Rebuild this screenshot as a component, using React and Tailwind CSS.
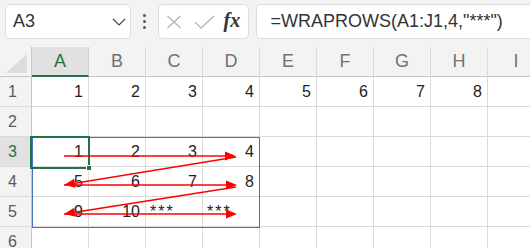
import React from "react";

const cols = ["A", "B", "C", "D", "E", "F", "G", "H", "I"];

// grid contents, row number -> cells (by column index)
const data = {
  1: [1, 2, 3, 4, 5, 6, 7, 8],
  2: [],
  3: [1, 2, 3, 4],
  4: [5, 6, 7, 8],
  5: [9, 10, "***", "***"],
  6: [],
};

// arrow path across the spilled range (coords relative to the grid)
const arrows = [
  [64, 109, 236, 109],
  [236, 110, 64, 138],
  [64, 138, 237, 138],
  [236, 140, 64, 167],
  [64, 167, 237, 167],
];

const head = (x1, y1, x2, y2) => {
  const len = Math.hypot(x2 - x1, y2 - y1);
  const ux = (x2 - x1) / len;
  const uy = (y2 - y1) / len;
  const bx = x2 - ux * 11;
  const by = y2 - uy * 11;
  const px = -uy * 4.5;
  const py = ux * 4.5;
  return `${x2},${y2} ${bx + px},${by + py} ${bx - px},${by - py}`;
};

const Cell = ({ value }) => {
  const isText = typeof value === "string";
  return (
    <div
      className={`h-[30px] border-r border-b border-[#dadada] bg-white flex items-center text-[16px] text-[#222] ${
        isText ? "justify-start pl-[4px] tracking-[2px]" : "justify-end pr-[5px]"
      }`}
    >
      {value}
    </div>
  );
};

export default function App() {
  return (
    <div className="w-[530px] h-[248px] overflow-hidden bg-[#f3f3f3] font-['Liberation_Sans',Arial,sans-serif]">
      {/* Toolbar: name box + formula bar */}
      <div className="flex items-start h-[47px] pt-[4px] pl-[5px]">
        <div className="shrink-0 w-[126px] h-[35px] bg-white border border-[#dcdcdc] rounded-[5px] flex items-center justify-between pl-[7px] pr-[4px]">
          <span className="text-[18px] text-[#333]">A3</span>
          <svg width="14" height="8" viewBox="0 0 14 8">
            <path d="M1 1 L7 7 L13 1" fill="none" stroke="#444" strokeWidth="1.2" />
          </svg>
        </div>
        <div className="shrink-0 w-[26.5px] h-[35px] flex flex-col items-center justify-center gap-[3px]">
          <div className="w-[3px] h-[3px] rounded-full bg-[#555]" />
          <div className="w-[3px] h-[3px] rounded-full bg-[#555]" />
          <div className="w-[3px] h-[3px] rounded-full bg-[#555]" />
        </div>
        <div className="shrink-0 w-[91px] h-[35px] bg-white border border-[#dcdcdc] rounded-[5px] flex items-center pl-[7px]">
          <svg width="16" height="14" viewBox="0 0 16 14">
            <path d="M1.5 1 L14.5 13 M14.5 1 L1.5 13" stroke="#b4b4b4" strokeWidth="1.3" />
          </svg>
          <svg width="21" height="14" viewBox="0 0 21 14" className="ml-[12px]">
            <path d="M1 7 L7 13 L20 1" fill="none" stroke="#b4b4b4" strokeWidth="1.3" />
          </svg>
          <span className="ml-[9px] -mt-[3px] font-['Liberation_Serif',serif] italic font-bold text-[20px] text-[#333] leading-none">
            fx
          </span>
        </div>
        <div className="shrink-0 ml-[7px] w-[290px] h-[35px] bg-white border border-[#dcdcdc] rounded-[5px] flex items-center pl-[14px]">
          <span className="text-[18px] text-[#333] whitespace-nowrap">=WRAPROWS(A1:J1,4,"***")</span>
        </div>
      </div>

      {/* Sheet grid */}
      <div className="relative">
        <div className="grid grid-cols-[32px_repeat(9,57px)] w-[545px]">
          {/* corner */}
          <div className="h-[30px] border-r border-b border-[#c6c6c6] bg-[#f3f3f3] flex items-end justify-end pr-[4px] pb-[3px]">
            <svg width="21" height="19" viewBox="0 0 21 19">
              <polygon points="21,0 21,19 0,19" fill="#dcdcdc" />
            </svg>
          </div>
          {cols.map((c) => (
            <div
              key={c}
              className={`h-[30px] flex items-center justify-center text-[18px] ${
                c === "A"
                  ? "bg-[#e1e1e1] text-[#217346] border-b-2 border-[#217346] border-r border-r-[#d0d0d0]"
                  : "bg-[#f3f3f3] text-[#727272] border-b border-[#c6c6c6] border-r border-r-[#dcdcdc]"
              }`}
            >
              {c}
            </div>
          ))}

          {Object.entries(data).map(([row, cells]) => (
            <React.Fragment key={row}>
              <div
                className={`h-[30px] flex items-center pl-[8px] text-[16px] border-b border-[#dadada] ${
                  row === "3"
                    ? "bg-[#e1e1e1] text-[#217346] border-r-2 border-r-[#217346]"
                    : "bg-[#f3f3f3] text-[#5a5a5a] border-r border-r-[#c6c6c6]"
                }`}
              >
                {row}
              </div>
              {cols.map((c, i) => (
                <Cell key={c} value={cells[i]} />
              ))}
            </React.Fragment>
          ))}
        </div>

        {/* spilled range outline */}
        <div className="absolute left-[32px] top-[90px] w-[228px] h-[91px] border border-[#4472c4] pointer-events-none" />

        {/* active cell A3 */}
        <div className="absolute left-[30px] top-[89px] w-[60px] h-[33px] border-2 border-[#217346] pointer-events-none" />
        <div className="absolute left-[86px] top-[118px] w-[6px] h-[6px] bg-[#217346] border border-white" />

        {/* wrap order arrows */}
        <svg className="absolute left-0 top-0 pointer-events-none" width="530" height="201">
          {arrows.map(([x1, y1, x2, y2], i) => {
            const len = Math.hypot(x2 - x1, y2 - y1);
            const ex = x2 - ((x2 - x1) / len) * 8;
            const ey = y2 - ((y2 - y1) / len) * 8;
            return (
              <g key={i}>
                <line x1={x1} y1={y1} x2={ex} y2={ey} stroke="#ff0000" strokeWidth="1.5" />
                <polygon points={head(x1, y1, x2, y2)} fill="#ff0000" />
              </g>
            );
          })}
        </svg>
      </div>
    </div>
  );
}
